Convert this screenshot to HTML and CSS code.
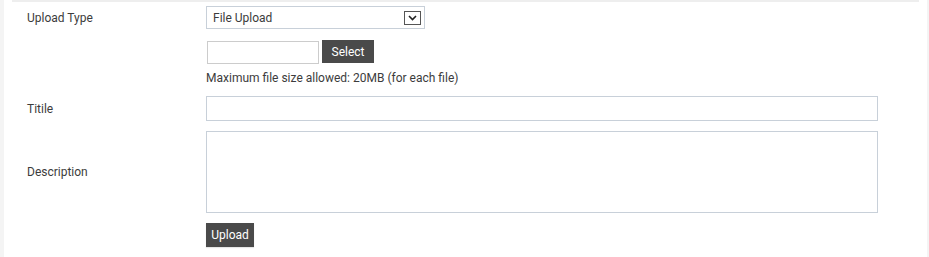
FILE: index.html
```html
<!DOCTYPE html>
<html>
<head>
<meta charset="utf-8">
<link rel="stylesheet" href="styles.css">
</head>
<body>
<div class="page">
  <div class="panel">
    <div class="row row-type">
      <div class="label">Upload Type</div>
      <div class="field">
        <div class="select">
          <span class="select-text">File Upload</span>
          <span class="select-arrow"><svg width="9" height="6" viewBox="0 0 9 6"><path d="M1 1 L4.5 4.5 L8 1" fill="none" stroke="#222" stroke-width="1.6"/></svg></span>
        </div>
      </div>
    </div>
    <div class="row row-file">
      <div class="label"></div>
      <div class="field file-group">
        <div class="file-input"></div>
        <div class="btn btn-select">Select</div>
      </div>
    </div>
    <div class="row row-hint">
      <div class="label"></div>
      <div class="field hint">Maximum file size allowed: 20MB (for each file)</div>
    </div>
    <div class="row row-title">
      <div class="label">Titile</div>
      <div class="field"><div class="text-input"></div></div>
    </div>
    <div class="row row-desc">
      <div class="label">Description</div>
      <div class="field"><div class="textarea"></div></div>
    </div>
    <div class="row row-upload">
      <div class="label"></div>
      <div class="field"><div class="btn btn-upload">Upload</div></div>
    </div>
  </div>
</div>
</body>
</html>
```
FILE: styles.css
```css
html, body {
  margin: 0;
  padding: 0;
  background: #fff;
}
body {
  font-family: Roboto, "Liberation Sans", sans-serif;
  font-size: 12px;
  color: #3c3c3c;
}
.page {
  width: 929px;
  height: 257px;
  box-sizing: border-box;
  border-left: 4px solid #f4f4f4;
  border-right: 2px solid #f4f4f4;
  padding-left: 8px;
  padding-right: 8px;
}
.panel {
  border-top: 2px solid #eeeeee;
  padding-top: 4px;
  display: flex;
  flex-direction: column;
}
.row {
  display: flex;
  align-items: center;
}
.label {
  width: 194px;
  flex: none;
  padding-left: 15px;
  box-sizing: border-box;
}
.field {
  flex: none;
}
.select {
  width: 219px;
  height: 23px;
  box-sizing: border-box;
  border: 1px solid #c8d0d9;
  display: flex;
  align-items: center;
  justify-content: space-between;
  padding-left: 6px;
  padding-right: 3px;
}
.select-arrow {
  width: 17px;
  height: 14px;
  box-sizing: border-box;
  border: 1px solid #555;
  background: #fff;
  display: flex;
  align-items: center;
  justify-content: center;
}
.row-file {
  margin-top: 11px;
}
.file-group {
  display: flex;
  gap: 3px;
  align-items: flex-start;
}
.file-input {
  width: 112px;
  height: 23px;
  margin-top: 1px;
  box-sizing: border-box;
  border: 1px solid #ccc;
  margin-left: 1px;
}
.btn {
  background: #4a4a4a;
  color: #fff;
  font-size: 12px;
  display: flex;
  align-items: center;
  justify-content: center;
  box-sizing: border-box;
}
.btn-select {
  width: 52px;
  height: 23px;
}
.row-hint {
  margin-top: 6px;
  height: 15px;
}
.row-title {
  margin-top: 11px;
}
.text-input {
  width: 672px;
  height: 25px;
  box-sizing: border-box;
  border: 1px solid #c8d0d9;
}
.row-desc {
  margin-top: 10px;
}
.textarea {
  width: 672px;
  height: 82px;
  box-sizing: border-box;
  border: 1px solid #c8d0d9;
}
.row-upload {
  margin-top: 10px;
}
.btn-upload {
  width: 48px;
  height: 24px;
  box-shadow: 0 1px 1px #e6e6e6;
}
```
